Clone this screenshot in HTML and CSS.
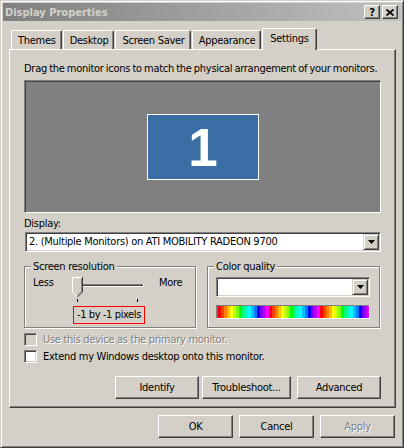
FILE: index.html
```html
<!DOCTYPE html>
<html lang="en">
<head>
    <meta charset="UTF-8">
    <title>Display Properties</title>
    <link rel="stylesheet" href="styles.css">
</head>
<body>

    <div class="window">

        <div class="titlebar">
            <span class="title">Display Properties</span>
            <div class="title-buttons">
                <span class="title-btn">?</span>
                <span class="title-btn">
                    <svg width="8" height="7" viewBox="0 0 8 7">
                        <path d="M0.5 0.5 L7.5 6.5 M7.5 0.5 L0.5 6.5" stroke="#000" stroke-width="1.7"/>
                    </svg>
                </span>
            </div>
        </div>

        <div class="tabs">
            <span class="tab">Themes</span>
            <span class="tab">Desktop</span>
            <span class="tab">Screen Saver</span>
            <span class="tab">Appearance</span>
            <span class="tab tab-active">Settings</span>
        </div>

        <div class="panel">
            <p class="hint">Drag the monitor icons to match the physical arrangement of your monitors.</p>

            <div class="monitors">
                <div class="monitor">1</div>
            </div>

            <div class="field-label">Display:</div>
            <div class="combo combo-wide">
                <span class="combo-text">2. (Multiple Monitors) on ATI MOBILITY RADEON 9700</span>
                <span class="combo-btn">
                    <svg width="7" height="4" viewBox="0 0 7 4"><polygon points="0,0 7,0 3.5,4" fill="#000"/></svg>
                </span>
            </div>

            <div class="groups">
                <div class="group group-res">
                    <span class="group-title">Screen resolution</span>
                    <div class="slider-row">
                        <span class="less">Less</span>
                        <svg class="slider" width="80" height="28" viewBox="0 0 80 28" shape-rendering="crispEdges">
                            <!-- track -->
                            <rect x="15" y="8" width="61" height="1" fill="#808080"/>
                            <rect x="15" y="9" width="61" height="1" fill="#404040"/>
                            <rect x="15" y="10" width="62" height="1" fill="#fff"/>
                            <rect x="76" y="8" width="1" height="3" fill="#fff"/>
                            <!-- thumb -->
                            <polygon points="5,1 16,1 16,16 10.5,21.5 5,16" fill="#d4d0c8" shape-rendering="auto"/>
                            <polyline points="5.5,16 5.5,1.5 15,1.5" fill="none" stroke="#fff"/>
                            <line x1="5.5" y1="16" x2="10.5" y2="21" stroke="#fff" shape-rendering="auto"/>
                            <polyline points="15.5,1 15.5,16" fill="none" stroke="#404040"/>
                            <line x1="15.5" y1="16" x2="10.5" y2="21" stroke="#404040" shape-rendering="auto"/>
                            <polyline points="14.5,2 14.5,15.5" fill="none" stroke="#808080"/>
                            <line x1="14.5" y1="15.5" x2="10.5" y2="19.5" stroke="#808080" shape-rendering="auto"/>
                            <!-- ticks -->
                            <rect x="10" y="23" width="1" height="3" fill="#000"/>
                            <rect x="70" y="23" width="1" height="3" fill="#000"/>
                        </svg>
                        <span class="more">More</span>
                    </div>
                    <div class="res-value">-1 by -1 pixels</div>
                </div>

                <div class="group group-color">
                    <span class="group-title">Color quality</span>
                    <div class="combo combo-small">
                        <span class="combo-text"></span>
                        <span class="combo-btn">
                            <svg width="7" height="4" viewBox="0 0 7 4"><polygon points="0,0 7,0 3.5,4" fill="#000"/></svg>
                        </span>
                    </div>
                    <div class="spectrum"></div>
                </div>
            </div>

            <label class="check check-disabled"><span class="box"></span>Use this device as the primary monitor.</label>
            <label class="check check-second"><span class="box"></span>Extend my Windows desktop onto this monitor.</label>

            <div class="panel-buttons">
                <button class="btn btn-identify">Identify</button>
                <button class="btn btn-trouble">Troubleshoot...</button>
                <button class="btn btn-advanced">Advanced</button>
            </div>
        </div>

        <div class="dialog-buttons">
            <button class="btn btn-dialog">OK</button>
            <button class="btn btn-dialog">Cancel</button>
            <button class="btn btn-dialog btn-disabled">Apply</button>
        </div>

    </div>

</body>
</html>
```

FILE: styles.css
```css
body {
    margin: 0;
    font-family: "DejaVu Sans Condensed", "Liberation Sans", Arial, sans-serif;
    font-size: 11px;
    line-height: 13px;
    letter-spacing: -0.28px;
    color: #000;
    background-color: #d4d0c8;
}

/* window frame */
.window {
    width: 404px;
    height: 448px;
    box-sizing: border-box;
    padding: 2px;
    border: 1px solid;
    border-color: #d4d0c8 #404040 #404040 #d4d0c8;
    box-shadow: inset 1px 1px #fff, inset -1px -1px #808080;
    background-color: #d4d0c8;
}

.titlebar {
    height: 18px;
    display: flex;
    align-items: center;
    justify-content: space-between;
    padding: 0 3px 0 2px;
    background: linear-gradient(to right, #808080, #c0c0c0);
}

.title {
    font-weight: bold;
    color: #d4d0c8;
    letter-spacing: 0;
}

.title-buttons {
    display: flex;
    gap: 2px;
}

.title-btn {
    width: 16px;
    height: 14px;
    box-sizing: border-box;
    border: 1px solid;
    border-color: #fff #404040 #404040 #fff;
    box-shadow: inset -1px -1px #808080;
    background-color: #d4d0c8;
    display: flex;
    align-items: center;
    justify-content: center;
    font-weight: bold;
    font-size: 11px;
}

/* tabs */
.tabs {
    display: flex;
    align-items: flex-end;
    height: 21px;
    margin-top: 7px;
    padding-left: 8px;
}

.tab {
    height: 19px;
    box-sizing: border-box;
    padding: 0 5px 0 6px;
    margin-right: 1px;
    display: flex;
    align-items: center;
    border-top: 1px solid #fff;
    border-left: 1px solid #fff;
    border-right: 1px solid #404040;
    box-shadow: inset -1px 0 #808080;
    border-top-left-radius: 2px;
    border-top-right-radius: 2px;
}

.tab-active {
    position: relative;
    z-index: 1;
    height: 22px;
    margin-bottom: -1px;
    padding: 0 7px 2px;
    background-color: #d4d0c8;
}

.panel {
    width: 387px;
    height: 359px;
    box-sizing: border-box;
    margin-left: 6px;
    padding: 12px 14px 0;
    border: 1px solid;
    border-color: #fff #404040 #404040 #fff;
    box-shadow: inset -1px -1px #808080;
}

.hint {
    margin: 0;
    white-space: nowrap;
    word-spacing: -0.6px;
}

.monitors {
    width: 356px;
    height: 132px;
    box-sizing: border-box;
    margin: 6px 0 0 1px;
    background-color: #808080;
    border: 1px solid;
    border-color: #404040 #fff #fff #404040;
    box-shadow: -1px -1px #808080;
    display: flex;
    align-items: center;
    justify-content: center;
}

.monitor {
    width: 112px;
    height: 66px;
    box-sizing: border-box;
    border: 1px solid #fff;
    background-color: #3a6ea5;
    color: #fff;
    font-family: "Liberation Sans", Arial, sans-serif;
    font-size: 53px;
    font-weight: bold;
    line-height: 1;
    letter-spacing: 0;
    display: flex;
    align-items: center;
    justify-content: center;
}

.field-label {
    margin-top: 4px;
}

/* combo box */
.combo {
    height: 20px;
    box-sizing: border-box;
    display: flex;
    padding: 1px;
    background-color: #fff;
    border: 1px solid;
    border-color: #808080 #fff #fff #808080;
    box-shadow: inset 1px 1px #404040, inset -1px -1px #d4d0c8;
}

.combo-wide {
    width: 356px;
    margin: 2px 0 0 1px;
}

.combo-small {
    width: 154px;
    margin-top: 4px;
}

.combo-text {
    flex: 1;
    padding-left: 2px;
    line-height: 16px;
}

.combo-btn {
    width: 16px;
    height: 16px;
    box-sizing: border-box;
    border: 1px solid;
    border-color: #d4d0c8 #404040 #404040 #d4d0c8;
    box-shadow: inset 1px 1px #fff, inset -1px -1px #808080;
    background-color: #d4d0c8;
    display: flex;
    align-items: center;
    justify-content: center;
}

/* group boxes */
.groups {
    display: flex;
    gap: 11px;
    margin-top: 14px;
}

.group {
    height: 62px;
    box-sizing: border-box;
    padding: 0 8px;
    border: 1px solid #808080;
    box-shadow: inset 1px 1px #fff, 1px 1px #fff;
}

.group-res {
    width: 172px;
}

.group-color {
    width: 173px;
}

.group-title {
    display: block;
    width: fit-content;
    margin: -7px 0 0 -2px;
    padding: 0 2px;
    background-color: #d4d0c8;
}

.slider-row {
    display: flex;
    align-items: flex-start;
    margin-top: 3px;
}

.less {
    width: 34px;
}

.more {
    margin-left: 12px;
}

.res-value {
    width: 72px;
    height: 18px;
    box-sizing: border-box;
    margin: 2px 0 0 40px;
    border: 1px solid #ff0000;
    text-align: center;
    line-height: 16px;
    letter-spacing: -0.4px;
    white-space: nowrap;
}

.spectrum {
    width: 154px;
    height: 14px;
    box-sizing: border-box;
    margin-top: 8px;
    border: 1px solid;
    border-color: #808080 #fff #fff #808080;
    background: repeating-linear-gradient(to right,
        #ff0000 0, #ff0000 3px, #ff4000 3px, #ff4000 6px,
        #ff8000 6px, #ff8000 9px, #ffc000 9px, #ffc000 12px,
        #ffff00 12px, #ffff00 15px, #c0ff00 15px, #c0ff00 18px,
        #80ff00 18px, #80ff00 21px, #00ff00 21px, #00ff00 24px,
        #00ff80 24px, #00ff80 27px, #00ffc0 27px, #00ffc0 30px,
        #00ffff 30px, #00ffff 33px, #00c0ff 33px, #00c0ff 36px,
        #0080ff 36px, #0080ff 39px, #0000ff 39px, #0000ff 42px,
        #8000ff 42px, #8000ff 45px, #c000ff 45px, #c000ff 48px,
        #ff00ff 48px, #ff00ff 51px);
    background-position: 1px 0;
}

/* check boxes */
.check {
    display: flex;
    align-items: center;
    gap: 6px;
    height: 14px;
    margin-top: 4px;
}

.check-second {
    margin-top: 3px;
}

.box {
    width: 13px;
    height: 13px;
    box-sizing: border-box;
    border: 1px solid;
    border-color: #808080 #fff #fff #808080;
    box-shadow: inset 1px 1px #404040, inset -1px -1px #d4d0c8;
    background-color: #fff;
}

.check-disabled {
    color: #808080;
    text-shadow: 1px 1px #fff;
}

.check-disabled .box {
    background-color: #d4d0c8;
}

/* buttons */
.btn {
    height: 23px;
    box-sizing: border-box;
    padding: 0;
    border: 1px solid;
    border-color: #fff #404040 #404040 #fff;
    box-shadow: inset -1px -1px #808080;
    background-color: #d4d0c8;
    font-family: inherit;
    font-size: 11px;
    letter-spacing: inherit;
    color: #000;
}

.panel-buttons {
    display: flex;
    justify-content: flex-end;
    margin-top: 13px;
}

.btn-identify {
    width: 84px;
    margin-right: 3px;
}

.btn-trouble {
    width: 89px;
    margin-right: 6px;
}

.btn-advanced {
    width: 84px;
}

.dialog-buttons {
    display: flex;
    justify-content: flex-end;
    gap: 6px;
    margin-top: 7px;
    padding-right: 6px;
}

.btn-dialog {
    width: 75px;
}

.btn-disabled {
    color: #808080;
    text-shadow: 1px 1px #fff;
}
```
